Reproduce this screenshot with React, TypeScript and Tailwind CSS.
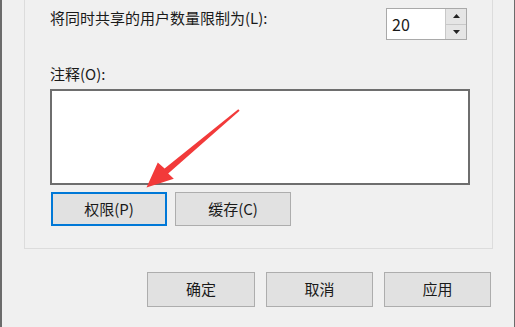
import React from "react";

const font = { fontFamily: '"Microsoft YaHei UI", "Noto Sans CJK SC", "Noto Sans", sans-serif' };

// ── Small spin-box (数字调节框) ─────────────────────────────────────────
function SpinBox({ value }: { value: string }) {
    return (
        <div className="ml-auto mr-[3px] flex h-[32px] w-[81px] border border-[#a9a9a9] bg-white">
            <div className="flex flex-1 items-center pl-[5px] text-[16px] leading-none text-[#1a1a1a]">
                {value}
            </div>
            <div className="flex w-[21px] flex-col border-l border-[#c8c8c8]">
                <div className="flex flex-1 items-center justify-center border-b border-[#c8c8c8] bg-[#e5e5e5]">
                    <svg width="7" height="4" viewBox="0 0 7 4">
                        <polygon points="3.5,0 7,4 0,4" fill="#222" />
                    </svg>
                </div>
                <div className="flex flex-1 items-center justify-center bg-[#e5e5e5]">
                    <svg width="7" height="4" viewBox="0 0 7 4">
                        <polygon points="0,0 7,0 3.5,4" fill="#222" />
                    </svg>
                </div>
            </div>
        </div>
    );
}

function Btn({
    label,
    focused = false,
    className = "",
}: {
    label: string;
    focused?: boolean;
    className?: string;
}) {
    return (
        <button
            className={`flex items-center justify-center bg-[#e1e1e1] text-[15px] text-[#1a1a1a] ${
                focused ? "border-2 border-[#0078d7]" : "border border-[#adadad]"
            } ${className}`}
        >
            {label}
        </button>
    );
}

export default function App() {
    return (
        <div
            className="relative flex h-[327px] w-[515px] flex-col overflow-hidden border-l-2 border-r border-[#6b6b6b] bg-[#f0f0f0]"
            style={font}
        >
            {/* ── Group box (top edge is cut off) ───────────────── */}
            <div className="ml-[22px] mr-[21px] flex flex-col border-x border-b border-[#dcdcdc] pb-[22px] pl-[25px] pr-[22px] pt-2">
                <div className="flex items-start">
                    <span className="text-[15px] leading-[20px] text-[#1a1a1a]">
                        将同时共享的用户数量限制为(L):
                    </span>
                    <SpinBox value="20" />
                </div>

                <span className="mt-6 text-[15px] leading-[20px] text-[#1a1a1a]">注释(O):</span>

                <div className="mt-[5px] h-[96px] w-full border-2 border-[#6e6e6e] bg-white" />

                <div className="mt-[7px] flex gap-[8px] pl-px">
                    <Btn label="权限(P)" focused className="h-[34px] w-[116px]" />
                    <Btn label="缓存(C)" className="h-[34px] w-[116px]" />
                </div>
            </div>

            {/* ── Dialog buttons ────────────────────────────────── */}
            <div className="mt-[23px] flex justify-end gap-[11px] pr-[23px]">
                <Btn label="确定" className="h-[35px] w-[108px]" />
                <Btn label="取消" className="h-[35px] w-[107px]" />
                <Btn label="应用" className="h-[35px] w-[107px]" />
            </div>

            {/* ── Red annotation arrow ──────────────────────────── */}
            <svg
                className="pointer-events-none absolute left-0 top-0"
                width="515"
                height="327"
                viewBox="0 0 515 327"
            >
                <polygon
                    points="236.3,109.2 162.6,168.4 155.8,162.4 144.5,187.5 171.8,178.8 166.2,173.6 237.6,110.8"
                    fill="#f23a3a"
                />
            </svg>
        </div>
    );
}
